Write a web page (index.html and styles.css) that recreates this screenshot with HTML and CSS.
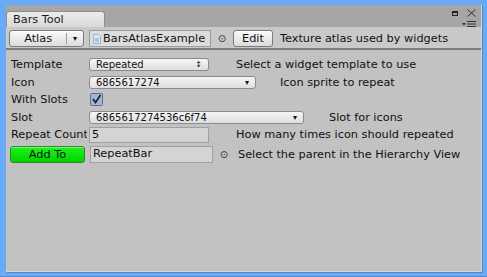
FILE: index.html
```html
<!DOCTYPE html>
<html lang="en">
<head>
  <meta charset="UTF-8">
  <title>Bars Tool</title>
  <link rel="stylesheet" href="styles.css">
</head>
<body>
  <div class="window">
    <div class="titlebar">
      <div class="tab">Bars Tool</div>
      <div class="win-controls">
        <svg class="ctl-max" width="6" height="5" viewBox="0 0 6 5">
          <rect x="0.5" y="0.5" width="5" height="4" fill="none" stroke="#222"/>
          <rect x="0" y="0" width="6" height="2" fill="#222"/>
        </svg>
        <svg class="ctl-close" width="9" height="8" viewBox="0 0 9 8">
          <path d="M0.5 0.5 L8.5 7.5 M8.5 0.5 L0.5 7.5" stroke="#333" stroke-width="1"/>
        </svg>
        <svg class="ctl-menu" width="14" height="6" viewBox="0 0 14 6">
          <path d="M0 2 H4 L2 4.5 Z" fill="#333"/>
          <rect x="5" y="0" width="9" height="1" fill="#333"/>
          <rect x="5" y="2.5" width="9" height="1" fill="#333"/>
          <rect x="5" y="5" width="9" height="1" fill="#333"/>
        </svg>
      </div>
    </div>

    <div class="toolbar">
      <div class="btn btn-atlas">
        <span class="btn-main">Atlas</span>
        <span class="btn-split">&#9662;</span>
      </div>
      <div class="objfield">
        <svg class="obj-icon" width="8" height="10" viewBox="0 0 8 10">
          <path d="M0.5 0.5 H5.5 L7.5 2.5 V9.5 H0.5 Z" fill="#dbe6f2" stroke="#9fb4cc"/>
          <rect x="2" y="4" width="4" height="4" fill="#a9c4e4"/>
        </svg>
        <span>BarsAtlasExample</span>
      </div>
      <span class="picker">&#8857;</span>
      <div class="btn btn-edit">Edit</div>
      <span class="desc desc-atlas">Texture atlas used by widgets</span>
    </div>

    <div class="content">
      <div class="row">
        <div class="label">Template</div>
        <div class="popup popup-template">
          <span>Repeated</span>
          <span class="arrow">&#8597;</span>
        </div>
        <div class="desc">Select a widget template to use</div>
      </div>

      <div class="row">
        <div class="label">Icon</div>
        <div class="popup popup-icon">
          <span>6865617274</span>
          <span class="arrow">&#9662;</span>
        </div>
        <div class="desc desc-icon">Icon sprite to repeat</div>
      </div>

      <div class="row">
        <div class="label">With Slots</div>
        <svg class="checkbox" width="13" height="13" viewBox="0 0 13 13">
          <rect x="0.5" y="0.5" width="12" height="12" rx="1" fill="#9fb6d8" stroke="#5b6f8e"/>
          <path d="M3 6 L5.5 9.5 L10.5 2" fill="none" stroke="#1b2438" stroke-width="1.8"/>
        </svg>
      </div>

      <div class="row">
        <div class="label">Slot</div>
        <div class="popup popup-slot">
          <span>6865617274536c6f74</span>
          <span class="arrow">&#9662;</span>
        </div>
        <div class="desc desc-slot">Slot for icons</div>
      </div>

      <div class="row row-count">
        <div class="label">Repeat Count</div>
        <div class="textfield">5</div>
        <div class="desc">How many times icon should repeated</div>
      </div>

      <div class="row row-add">
        <div class="btn btn-add">Add To</div>
        <div class="textfield tf-parent">RepeatBar</div>
        <span class="picker">&#8857;</span>
        <div class="desc desc-parent">Select the parent in the Hierarchy View</div>
      </div>
    </div>
  </div>
</body>
</html>
```

FILE: styles.css
```css
body {
  margin: 0;
  background-color: #68aaf6;
  font-family: "DejaVu Sans", Verdana, sans-serif;
  font-size: 11.3px;
  color: #111;
  height: 277px;
  border-bottom: 1px solid #4f8bd6;
  box-sizing: border-box;
  overflow: hidden;
}

.window {
  margin: 5px 5px 0 6px;
  height: 266px;
  background-color: #c2c2c2;
  border-right: 1px solid #d6d6d6;
  border-bottom: 1px solid #d6d6d6;
  box-shadow: 1px 1px 0 #4f86cc;
}

.titlebar {
  height: 22px;
  background-color: #a6a6a6;
  display: flex;
  align-items: flex-end;
  position: relative;
}

.tab {
  width: 91px;
  height: 15px;
  padding-left: 6px;
  line-height: 16px;
  background: linear-gradient(#ececec, #d8d8d8);
  border: 1px solid #8e8e8e;
  border-bottom: none;
  border-radius: 3px 3px 0 0;
  color: #1a1a1a;
}

.win-controls svg {
  position: absolute;
}

.ctl-max {
  left: 446px;
  top: 6px;
}

.ctl-close {
  left: 461px;
  top: 4px;
}

.ctl-menu {
  left: 456px;
  top: 16px;
}

.toolbar {
  height: 23px;
  background-color: #c9c9c9;
  border-bottom: 2px solid #7e7e7e;
  display: flex;
  align-items: center;
  padding-left: 3px;
  box-sizing: border-box;
  padding-top: 2px;
}

.btn {
  height: 15px;
  border: 1px solid #7a7a7a;
  border-radius: 3px;
  background: linear-gradient(#fafafa, #dcdcdc);
  display: flex;
  align-items: center;
  justify-content: center;
  box-shadow: inset 0 1px 0 #ffffff;
  flex: none;
}

.btn-atlas {
  width: 73px;
  justify-content: flex-start;
}

.btn-main {
  width: 57px;
  text-align: center;
  border-right: 1px solid #9a9a9a;
  line-height: 11px;
}

.btn-split {
  width: 16px;
  text-align: center;
  font-size: 8px;
}

.objfield {
  margin-left: 5px;
  width: 120px;
  height: 15px;
  background-color: #dcdcdc;
  border: 1px solid #9c9c9c;
  display: flex;
  align-items: center;
  overflow: hidden;
  white-space: nowrap;
  flex: none;
}

.obj-icon {
  margin: 0 2px 0 3px;
  flex: none;
}

.picker {
  width: 22px;
  text-align: center;
  font-size: 10px;
  color: #333;
}

.btn-edit {
  width: 38px;
}

.desc {
  margin-left: 27px;
  white-space: nowrap;
}

.desc-atlas {
  margin-left: 7px;
}

.desc-icon {
  margin-left: 24px;
}

.desc-slot {
  margin-left: 25px;
}

.desc-parent {
  margin-left: 3px;
}

.content {
  padding: 6px 0 0 5px;
}

.row {
  height: 17.5px;
  display: grid;
  grid-auto-flow: column;
  justify-content: start;
  align-items: center;
}

.row-count {
  grid-template-columns: 78px 120px max-content;
}

.row-add {
  margin-top: 2px;
  height: 18px;
}

.label {
  width: 76px;
  margin-right: 2px;
  overflow: hidden;
  white-space: nowrap;
}

.popup {
  height: 11px;
  border: 1px solid #8c8c8c;
  border-radius: 3px;
  background: linear-gradient(#f6f6f6, #dedede);
  display: flex;
  align-items: center;
  justify-content: space-between;
  padding: 0 6px;
  font-size: 10px;
  line-height: 11px;
}

.popup .arrow {
  font-size: 8px;
}

.popup-template {
  width: 106px;
}

.popup-icon {
  width: 153px;
}

.popup-slot {
  width: 201px;
}

.checkbox {
  margin-left: 1px;
}

.textfield {
  height: 16px;
  border: 1px solid #a0a0a0;
  background-color: #d4d4d4;
  padding-left: 2px;
  line-height: 14px;
  box-sizing: border-box;
  overflow: hidden;
  min-width: 0;
}

.tf-parent {
  width: 123px;
  height: 17px;
}

.btn-add {
  margin-left: -1px;
  margin-right: 5px;
  width: 73px;
  background: linear-gradient(#1cf21c, #00d400);
  border-color: #3b7d3b;
  box-shadow: inset 0 1px 0 #6cff6c;
}
```
